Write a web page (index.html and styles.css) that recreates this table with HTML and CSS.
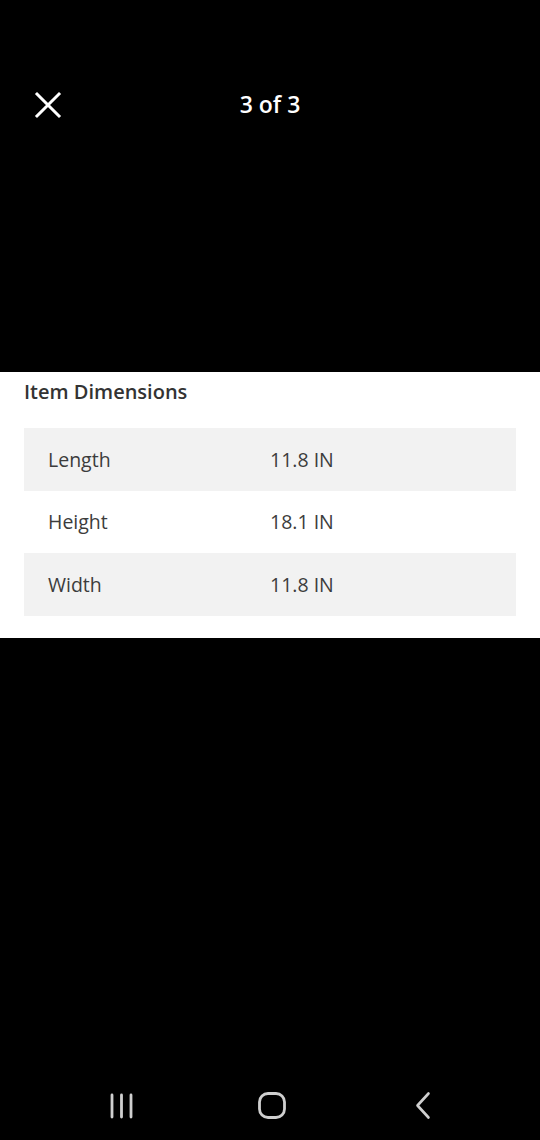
FILE: index.html
```html
<!DOCTYPE html>
<html>
<head>
<meta charset="utf-8">
<link rel="stylesheet" href="styles.css">
</head>
<body>
<div class="screen">
  <header class="topbar">
    <button class="close" aria-label="Close">
      <svg width="28" height="28" viewBox="0 0 28 28"><path d="M3 3 L25 25 M25 3 L3 25" stroke="#fff" stroke-width="3" stroke-linecap="square"/></svg>
    </button>
    <div class="counter">3 of 3</div>
  </header>
  <div class="media-top"></div>
  <section class="panel">
    <h2 class="title">Item Dimensions</h2>
    <div class="table">
      <div class="row shaded"><span class="label">Length</span><span class="value">11.8 IN</span></div>
      <div class="row"><span class="label">Height</span><span class="value">18.1 IN</span></div>
      <div class="row shaded"><span class="label">Width</span><span class="value">11.8 IN</span></div>
    </div>
  </section>
  <div class="spacer"></div>
  <nav class="navbar">
    <svg class="nav-recents" width="26" height="26" viewBox="0 0 26 26"><path d="M3 2 V24 M12.5 2 V24 M22 2 V24" stroke="#cfcfcf" stroke-width="2.8" stroke-linecap="round"/></svg>
    <svg class="nav-home" width="30" height="30" viewBox="0 0 30 30"><rect x="2.5" y="2.5" width="25" height="24" rx="8.5" fill="none" stroke="#cfcfcf" stroke-width="2.8"/></svg>
    <svg class="nav-back" width="18" height="30" viewBox="0 0 18 30"><path d="M14.5 2.5 L3.5 14.5 L14.5 26.5" fill="none" stroke="#cfcfcf" stroke-width="2.6" stroke-linecap="round" stroke-linejoin="round"/></svg>
  </nav>
</div>
</body>
</html>
```
FILE: styles.css
```css
* { box-sizing: border-box; }
html, body { margin: 0; padding: 0; background: #000; }
body { font-family: "Open Sans", Lato, "Liberation Sans", sans-serif; }
.screen {
  width: 540px;
  height: 1140px;
  display: flex;
  flex-direction: column;
  background: #000;
}
.topbar {
  height: 210px;
  position: relative;
  display: flex;
  justify-content: center;
  padding-top: 88px;
}
.close {
  position: absolute;
  left: 34px;
  top: 91px;
  background: none;
  border: 0;
  padding: 0;
  width: 28px;
  height: 28px;
}
.close svg { display: block; }
.counter {
  color: #fff;
  font-size: 23px;
  font-weight: 600;
  line-height: 32px;
}
.media-top { height: 162px; }
.panel {
  background: #fff;
  padding: 0 24px 22px;
}
.title {
  margin: 0;
  height: 56px;
  padding-top: 6px;
  font-size: 20px;
  line-height: 27px;
  font-weight: 600;
  color: #333;
}
.table { display: flex; flex-direction: column; }
.row {
  display: flex;
  align-items: center;
  height: 62.5px;
  padding-left: 24px;
  font-size: 19.5px;
  color: #3c3c3c;
}
.row.shaded { background: #f2f2f2; }
.label { width: 222px; }
.spacer { flex: 1; }
.navbar {
  height: 74px;
  position: relative;
}
.nav-recents { position: absolute; left: 109px; top: 27px; }
.nav-home { position: absolute; left: 257px; top: 25px; }
.nav-back { position: absolute; left: 414px; top: 25px; }
```
